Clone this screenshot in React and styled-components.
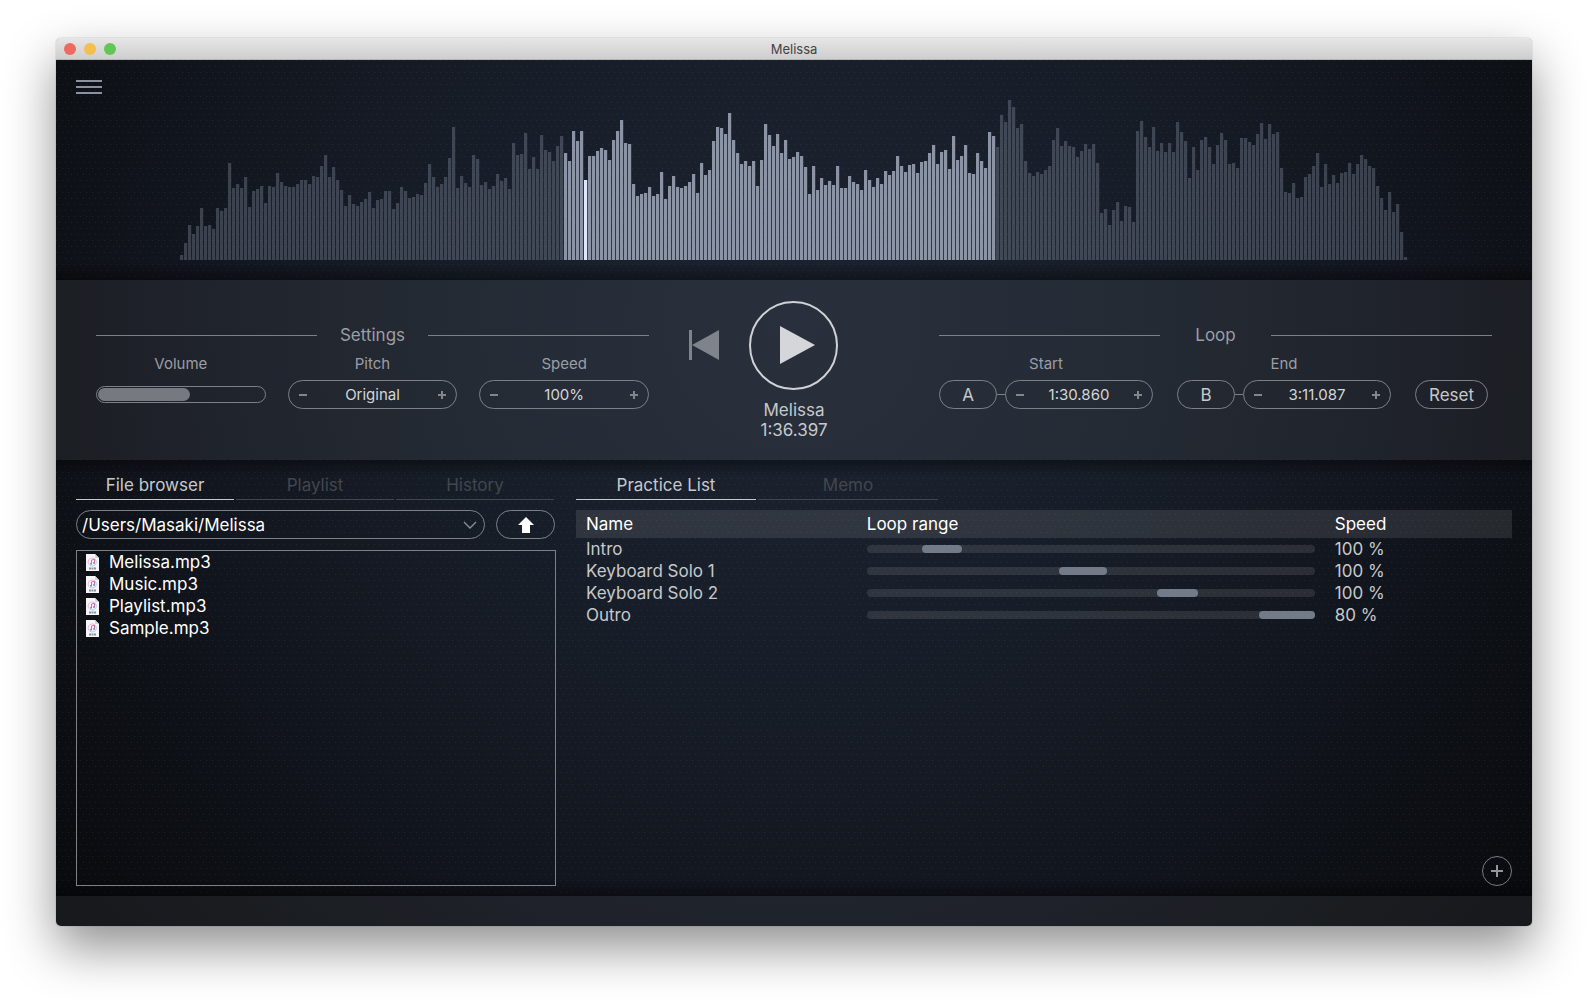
import React from 'react';
import styled, { createGlobalStyle } from 'styled-components';

const GlobalStyle = createGlobalStyle`
  *, *::before, *::after { box-sizing: border-box; }
  body { margin: 0; background: #fff; }
  button, select, input { font: inherit; color: inherit; margin: 0; }
  button { cursor: pointer; }
`;

const line = '#7d8087';

const Page = styled.div`
  min-height: 100vh;
  padding: 38px 56px 74px;
  display: flex;
  font-family: Inter, "Liberation Sans", sans-serif;
  font-size: 17px;
  line-height: 22px;
  color: #c6c8cc;
`;

const Window = styled.div`
  flex: 1;
  min-width: 0;
  display: flex;
  flex-direction: column;
  border-radius: 5px;
  overflow: hidden;
  box-shadow: 0 22px 50px rgba(0, 0, 0, 0.44), 0 0 1px rgba(0, 0, 0, 0.6);
`;

const TitleBar = styled.header`
  height: 22px;
  padding: 0 8px;
  display: grid;
  grid-template-columns: 1fr auto 1fr;
  align-items: center;
  background: linear-gradient(#e6e6e6, #cecece);
  border-bottom: 1px solid #b4b4b4;
`;

const Lights = styled.div`
  display: flex;
  gap: 8px;
`;

const Light = styled.button`
  width: 12px;
  height: 12px;
  padding: 0;
  border: 0;
  border-radius: 50%;
  background: ${(p) => p.$color};
`;

const Title = styled.h1`
  margin: 0;
  font-size: 13px;
  font-weight: 400;
  line-height: 20px;
  color: #444;
`;

const Body = styled.main`
  flex: 1;
  display: flex;
  flex-direction: column;
  background: radial-gradient(circle 920px at 50% 30%, #1c2330 0%, #181e29 35%, #12161f 65%, #0d1015 83%, #090b0f 100%);
`;

const Dotted = styled.section`
  background-image:
    linear-gradient(${(p) => (p.$topShade ? 'rgba(0,0,0,0.4)' : 'transparent')}, transparent 16px),
    linear-gradient(to top, rgba(0, 0, 0, 0.4), transparent 18px),
    conic-gradient(from 270deg at 1px 1px, rgba(255, 255, 255, 0.07) 90deg, transparent 0),
    conic-gradient(from 270deg at 1px 1px, rgba(255, 255, 255, 0.07) 90deg, transparent 0);
  background-size: auto, auto, 6px 12px, 6px 12px;
  background-position: 0 0, 0 0, 0 0, 3px 6px;
`;

const WaveSection = styled(Dotted)`
  padding: 20px;
  display: grid;
  grid-template-columns: 1fr auto 1fr;
`;

const MenuButton = styled.button`
  width: 26px;
  height: 14px;
  padding: 0;
  border: 0;
  background: none;
  display: flex;
  flex-direction: column;
  justify-content: space-between;
  &::before, &::after { content: ''; }
  &::before, &::after, span { width: 100%; height: 2px; background: #8a92a2; }
`;

const Wave = styled.svg`
  display: block;
  margin-top: 20px;
`;

const Controls = styled.section`
  min-height: 180px;
  padding: 0 40px;
  display: grid;
  grid-template-columns: 553fr 290fr 553fr;
  background: rgba(255, 255, 255, 0.06);
`;

const Group = styled.section`
  padding-top: 44px;
  display: flex;
  flex-direction: column;
  gap: 8px;
`;

const GroupTitle = styled.h2`
  margin: 0;
  display: grid;
  grid-template-columns: 1fr 111px 1fr;
  align-items: center;
  text-align: center;
  font-size: 17px;
  font-weight: 400;
  line-height: 22px;
  color: #9b9ea4;
  &::before, &::after { content: ''; height: 1px; background: ${line}; }
`;

const Fields = styled.div`
  display: grid;
  grid-template-columns: ${(p) => p.$columns};
  gap: ${(p) => p.$gap}px;
  align-items: end;
`;

const Field = styled.div`
  display: grid;
  row-gap: 6px;
  text-align: center;
`;

const FieldLabel = styled.label`
  font-size: 15px;
  line-height: 20px;
  color: #9b9ea4;
`;

const Row = styled.div`
  display: flex;
  align-items: center;
  height: 29px;
`;

const Slider = styled.input`
  appearance: none;
  width: 100%;
  height: 17px;
  padding: 1px;
  border: 1px solid ${line};
  border-radius: 9px;
  background: none;
  &::-webkit-slider-runnable-track {
    height: 13px;
    border-radius: 7px;
    background: linear-gradient(#76797f, #76797f) 0 0 / calc((100% - 13px) * ${(p) => p.value / 100} + 6px) 100% no-repeat;
  }
  &::-webkit-slider-thumb {
    appearance: none;
    width: 13px;
    height: 13px;
    border-radius: 50%;
    background: #76797f;
  }
`;

const Pill = styled.button`
  width: ${(p) => p.$width}px;
  height: 29px;
  flex: none;
  padding: 0;
  display: flex;
  align-items: center;
  justify-content: center;
  border: 1px solid ${line};
  border-radius: 15px;
  background: none;
  line-height: 20px;
`;

const Connector = styled.span`
  width: 8px;
  height: 1px;
  background: ${line};
`;

const StepperBox = styled.div`
  flex: 1;
  height: 29px;
  padding: 0 5px;
  display: flex;
  align-items: center;
  justify-content: space-between;
  border: 1px solid ${line};
  border-radius: 15px;
`;

const StepButton = styled.button`
  width: 18px;
  height: 20px;
  padding: 0;
  border: 0;
  display: grid;
  place-items: center;
  background: none;
  color: #82858c;
`;

const Value = styled.output`
  font-size: 15px;
  line-height: 20px;
  color: #d4d6d9;
`;

const Transport = styled.div`
  padding-top: 20px;
  display: grid;
  grid-template-columns: 1fr 90px 1fr;
  grid-template-rows: 90px auto;
  gap: 10px 30px;
  align-items: center;
`;

const PreviousButton = styled.button`
  justify-self: end;
  padding: 0;
  border: 0;
  background: none;
  display: flex;
  color: #7f838c;
`;

const PlayButton = styled.button`
  width: 89px;
  height: 89px;
  padding: 0 0 0 7px;
  display: grid;
  place-items: center;
  border: 2px solid #cfd1d5;
  border-radius: 50%;
  background: none;
  color: #d4d6da;
`;

const Track = styled.div`
  grid-column: 1 / -1;
  align-self: start;
  text-align: center;
  line-height: 20px;
  p { margin: 0; }
`;

const Library = styled(Dotted)`
  flex: 1;
  padding: 10px 20px;
  display: grid;
  grid-template-columns: 480fr 936fr;
  column-gap: 20px;
`;

const Panel = styled.section`
  display: flex;
  flex-direction: column;
  gap: 10px;
`;

const Tabs = styled.div`
  padding-right: 2px;
  display: grid;
  grid-template-columns: ${(p) => p.$columns};
  gap: 2px;
`;

const Tab = styled.button`
  height: 30px;
  padding: 0;
  border: 0;
  border-bottom: 1px solid ${(p) => (p.$active ? '#c6c8cc' : '#42464e')};
  background: none;
  line-height: 20px;
  color: ${(p) => (p.$active ? '#c6c8cc' : '#42464e')};
`;

const PathRow = styled.div`
  padding-right: 1px;
  display: flex;
  gap: 11px;
`;

const PathBox = styled.div`
  flex: 1;
  display: grid;
  grid-template-columns: 1fr 22px;
  align-items: center;
  svg { grid-area: 1 / 2; pointer-events: none; }
`;

const PathSelect = styled.select`
  grid-area: 1 / 1 / 2 / 3;
  appearance: none;
  height: 29px;
  padding: 0 28px 0 5px;
  border: 1px solid ${line};
  border-radius: 15px;
  background: none;
  color: #fff;
`;

const Files = styled.ul`
  flex: 1;
  margin: 1px 0 0;
  padding: 0;
  list-style: none;
  border: 1px solid ${line};
  color: #fff;
`;

const File = styled.li`
  height: 22px;
  padding-left: 9px;
  display: flex;
  align-items: center;
  gap: 10px;
`;

const Table = styled.table`
  width: 100%;
  border-collapse: collapse;
  table-layout: fixed;
  th, td { height: 22px; padding: 0 0 0 10px; text-align: left; font-weight: 400; }
  thead th { height: 28px; color: #fff; }
  thead { background: rgba(255, 255, 255, 0.1); }
`;

const Column = styled.col`
  width: ${(p) => p.$share}%;
`;

const Range = styled.div`
  height: 8px;
  margin-right: 10px;
  border-radius: 4px;
  background: rgba(255, 255, 255, 0.1);
`;

const RangePart = styled.div`
  height: 8px;
  border-radius: 4px;
  background: #737b89;
`;

const AddButton = styled.button`
  width: 30px;
  height: 30px;
  margin-top: auto;
  align-self: flex-end;
  padding: 0;
  display: grid;
  place-items: center;
  border: 1px solid #767b85;
  border-radius: 50%;
  background: none;
  color: #8f96a2;
`;

const Footer = styled.footer`
  height: 30px;
  background: rgba(255, 255, 255, 0.06);
`;

const peaks = [
  5, 17, 35, 26, 34, 52, 34, 35, 31, 52, 49, 52, 97, 72, 76, 72, 83, 53, 69, 71, 74, 57, 74, 73, 87, 78, 74, 73, 73, 76,
  80, 80, 76, 84, 83, 94, 105, 83, 93, 80, 70, 54, 65, 56, 54, 58, 61, 68, 52, 60, 61, 69, 69, 51, 57, 73, 69, 62, 63, 66,
  65, 77, 96, 83, 73, 76, 83, 102, 133, 72, 84, 77, 73, 105, 101, 75, 78, 71, 74, 86, 79, 82, 71, 117, 105, 106, 127, 91, 103, 91,
  125, 110, 108, 99, 114, 124, 107, 99, 129, 119, 129, 80, 104, 104, 109, 112, 110, 100, 120, 129, 140, 117, 116, 76, 64, 66, 67, 73, 64, 66,
  88, 61, 74, 84, 73, 72, 74, 78, 86, 67, 97, 85, 90, 119, 133, 132, 126, 147, 120, 107, 96, 99, 94, 99, 74, 100, 136, 125, 114, 126,
  107, 120, 101, 103, 108, 104, 93, 66, 94, 70, 82, 75, 79, 75, 94, 72, 72, 84, 78, 76, 70, 90, 80, 73, 82, 76, 89, 85, 89, 104,
  94, 88, 95, 96, 87, 98, 99, 107, 115, 96, 108, 110, 91, 124, 100, 104, 115, 87, 86, 107, 99, 92, 128, 124, 113, 145, 138, 160, 153, 132,
  136, 99, 87, 84, 88, 86, 90, 94, 120, 132, 114, 119, 114, 113, 103, 109, 116, 111, 116, 97, 47, 51, 35, 50, 58, 39, 54, 53, 38, 129,
  139, 123, 113, 133, 109, 117, 108, 117, 108, 138, 128, 119, 82, 113, 90, 120, 123, 113, 96, 115, 127, 120, 96, 97, 92, 122, 122, 118, 115, 126,
  137, 121, 136, 126, 128, 92, 68, 67, 77, 62, 63, 83, 86, 94, 107, 73, 96, 76, 85, 77, 87, 88, 97, 86, 96, 105, 101, 94, 92, 74,
  62, 50, 68, 48, 56, 28, 3,
];
const loopStart = 96;
const loopEnd = 203;
const playhead = 101;

function barColor(i) {
  if (i === playhead) return '#e0e7fb';
  return i >= loopStart && i <= loopEnd ? 'rgba(155,165,184,0.87)' : 'rgba(150,158,176,0.32)';
}

function Waveform() {
  return (
    <Wave width="1228" height="160" viewBox="0 0 1228 160" role="img" aria-label="Waveform">
      {peaks.map((h, i) => (
        <rect key={i} x={i * 4} y={160 - h} width="3.2" height={h} fill={barColor(i)} />
      ))}
    </Wave>
  );
}

function Stepper({ id, name, value }) {
  return (
    <StepperBox>
      <StepButton aria-label={`Decrease ${name}`}>
        <svg width="8" height="8" viewBox="0 0 8 8"><path d="M0 4h8" stroke="currentColor" strokeWidth="2" /></svg>
      </StepButton>
      <Value id={id}>{value}</Value>
      <StepButton aria-label={`Increase ${name}`}>
        <svg width="8" height="8" viewBox="0 0 8 8"><path d="M0 4h8M4 0v8" stroke="currentColor" strokeWidth="2" /></svg>
      </StepButton>
    </StepperBox>
  );
}

function Mp3Icon() {
  return (
    <svg width="13" height="17" viewBox="0 0 13 17" aria-hidden="true">
      <path d="M0 0h9l4 4v13H0z" fill="#f6f6f8" />
      <path d="M9 0v4h4z" fill="#d5d7dc" />
      <path d="M3 10.500A4 4 0 0 1 6.500 4" fill="none" stroke="#f0b4d6" strokeWidth="1" />
      <path d="M6.500 4A4 4 0 1 1 3.500 10.800" fill="none" stroke="#a9cdf5" strokeWidth="1" />
      <path d="M5.500 9.800V6l3-.7v3.700" fill="none" stroke="#e8688c" strokeWidth="1" />
      <circle cx="5" cy="9.800" r="1" fill="#6f8dee" />
      <circle cx="8" cy="9" r="1" fill="#6f8dee" />
      <path d="M3 14.500h7" stroke="#8d9097" strokeWidth="2" strokeDasharray="2 .5" />
    </svg>
  );
}

const files = ['Melissa.mp3', 'Music.mp3', 'Playlist.mp3', 'Sample.mp3'];

const practice = [
  { name: 'Intro', from: 12.4, to: 21.2, speed: '100 %' },
  { name: 'Keyboard Solo 1', from: 42.9, to: 53.6, speed: '100 %' },
  { name: 'Keyboard Solo 2', from: 64.8, to: 73.9, speed: '100 %' },
  { name: 'Outro', from: 87.5, to: 100, speed: '80 %' },
];

export default function App() {
  const [volume, setVolume] = React.useState(52);
  return (
    <>
      <GlobalStyle />
      <Page>
        <Window>
          <TitleBar>
            <Lights>
              <Light $color="#ed6a5f" aria-label="Close" />
              <Light $color="#f5bf50" aria-label="Minimize" />
              <Light $color="#62c655" aria-label="Zoom" />
            </Lights>
            <Title>Melissa</Title>
          </TitleBar>
          <Body>
            <WaveSection>
              <MenuButton aria-label="Menu"><span /></MenuButton>
              <Waveform />
            </WaveSection>

            <Controls>
              <Group>
                <GroupTitle>Settings</GroupTitle>
                <Fields $columns="1fr 1fr 1fr" $gap={22}>
                  <Field>
                    <FieldLabel htmlFor="volume">Volume</FieldLabel>
                    <Row>
                      <Slider id="volume" type="range" min="0" max="100" value={volume} onChange={(e) => setVolume(Number(e.target.value))} />
                    </Row>
                  </Field>
                  <Field>
                    <FieldLabel htmlFor="pitch">Pitch</FieldLabel>
                    <Row><Stepper id="pitch" name="pitch" value="Original" /></Row>
                  </Field>
                  <Field>
                    <FieldLabel htmlFor="speed">Speed</FieldLabel>
                    <Row><Stepper id="speed" name="speed" value="100%" /></Row>
                  </Field>
                </Fields>
              </Group>

              <Transport>
                <PreviousButton aria-label="Back to start">
                  <svg width="30" height="30" viewBox="0 0 30 30" fill="currentColor"><path d="M0 0h3v30H0zM30 0v30L3 15z" /></svg>
                </PreviousButton>
                <PlayButton aria-label="Play">
                  <svg width="35" height="38" viewBox="0 0 35 38" fill="currentColor"><path d="M0 0l35 19L0 38z" /></svg>
                </PlayButton>
                <Track>
                  <p>Melissa</p>
                  <p>1:36.397</p>
                </Track>
              </Transport>

              <Group>
                <GroupTitle>Loop</GroupTitle>
                <Fields $columns="1fr 1fr 77px" $gap={24}>
                  <Field>
                    <FieldLabel htmlFor="start">Start</FieldLabel>
                    <Row>
                      <Pill $width={58}>A</Pill>
                      <Connector />
                      <Stepper id="start" name="start" value="1:30.860" />
                    </Row>
                  </Field>
                  <Field>
                    <FieldLabel htmlFor="end">End</FieldLabel>
                    <Row>
                      <Pill $width={58}>B</Pill>
                      <Connector />
                      <Stepper id="end" name="end" value="3:11.087" />
                    </Row>
                  </Field>
                  <Pill $width={73}>Reset</Pill>
                </Fields>
              </Group>
            </Controls>

            <Library $topShade>
              <Panel>
                <Tabs role="tablist" $columns="1fr 1fr 1fr">
                  <Tab role="tab" aria-selected="true" $active>File browser</Tab>
                  <Tab role="tab" aria-selected="false">Playlist</Tab>
                  <Tab role="tab" aria-selected="false">History</Tab>
                </Tabs>
                <PathRow>
                  <PathBox>
                    <PathSelect aria-label="Folder">
                      <option>/Users/Masaki/Melissa</option>
                    </PathSelect>
                    <svg width="14" height="8" viewBox="0 0 14 8" fill="none" stroke="#8b8f97" strokeWidth="1.3"><path d="M1 1l6 6 6-6" /></svg>
                  </PathBox>
                  <Pill $width={59} aria-label="Parent folder">
                    <svg width="16" height="16" viewBox="0 0 16 16" fill="#fff"><path d="M8 0l8 8h-4v8H4V8H0z" /></svg>
                  </Pill>
                </PathRow>
                <Files>
                  {files.map((name) => (
                    <File key={name}><Mp3Icon />{name}</File>
                  ))}
                </Files>
              </Panel>

              <Panel>
                <Tabs role="tablist" $columns="180px 180px">
                  <Tab role="tab" aria-selected="true" $active>Practice List</Tab>
                  <Tab role="tab" aria-selected="false">Memo</Tab>
                </Tabs>
                <Table>
                  <colgroup>
                    <Column $share={30} />
                    <Column $share={50} />
                    <Column $share={20} />
                  </colgroup>
                  <thead>
                    <tr><th scope="col">Name</th><th scope="col">Loop range</th><th scope="col">Speed</th></tr>
                  </thead>
                  <tbody>
                    {practice.map((p) => (
                      <tr key={p.name}>
                        <td>{p.name}</td>
                        <td>
                          <Range>
                            <RangePart style={{ marginLeft: `${p.from}%`, width: `${p.to - p.from}%` }} />
                          </Range>
                        </td>
                        <td>{p.speed}</td>
                      </tr>
                    ))}
                  </tbody>
                </Table>
                <AddButton aria-label="Add">
                  <svg width="12" height="12" viewBox="0 0 12 12"><path d="M0 6h12M6 0v12" stroke="currentColor" strokeWidth="2" /></svg>
                </AddButton>
              </Panel>
            </Library>
            <Footer />
          </Body>
        </Window>
      </Page>
    </>
  );
}
